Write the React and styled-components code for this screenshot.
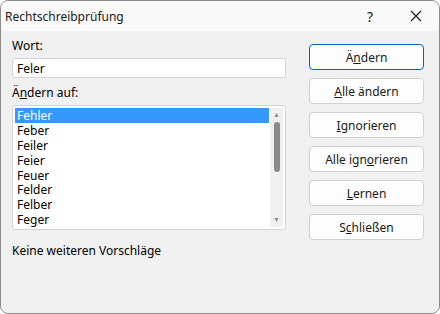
import React from 'react'
import styled, { createGlobalStyle } from 'styled-components'

const Global = createGlobalStyle`
  html, body {
    margin: 0;
    padding: 0;
    background: #ffffff;
  }
  * { box-sizing: border-box; }
`

const suggestions = ['Fehler', 'Feber', 'Feiler', 'Feier', 'Feuer', 'Felder', 'Felber', 'Feger']

const buttons = [
  { pre: 'Ä', key: 'n', post: 'dern', primary: true },
  { pre: '', key: 'A', post: 'lle ändern' },
  { pre: '', key: 'I', post: 'gnorieren' },
  { pre: 'Alle ign', key: 'o', post: 'rieren' },
  { pre: '', key: 'L', post: 'ernen' },
  { pre: 'S', key: 'c', post: 'hließen' }
]

export default function App() {
  return (
    <>
      <Global />
      <Window>
        <TitleBar>
          <Title>Rechtschreibprüfung</Title>
          <Caption>?</Caption>
          <Caption>
            <svg width="12" height="12" viewBox="0 0 12 12">
              <path d="M1 1 L11 11 M11 1 L1 11" stroke="#1a1a1a" strokeWidth="1.1" fill="none" />
            </svg>
          </Caption>
        </TitleBar>
        <Body>
          <LeftColumn>
            <Label>Wort:</Label>
            <Input defaultValue="Feler" />
            <Label $top={7}>
              Ä<u>n</u>dern auf:
            </Label>
            <ListBox>
              <Items>
                {suggestions.map((word, i) => (
                  <Item key={word} $selected={i === 0}>{word}</Item>
                ))}
              </Items>
              <ScrollBar>
                <Arrow>▲</Arrow>
                <Track>
                  <Thumb />
                </Track>
                <Arrow>▼</Arrow>
              </ScrollBar>
            </ListBox>
            <Status>Keine weiteren Vorschläge</Status>
          </LeftColumn>
          <ButtonColumn>
            {buttons.map(b => (
              <Button key={b.key + b.post} $primary={b.primary}>
                {b.pre}<u>{b.key}</u>{b.post}
              </Button>
            ))}
          </ButtonColumn>
        </Body>
      </Window>
    </>
  )
}

const Window = styled.div`
  width: 440px;
  height: 314px;
  border: 1px solid #8c8c8c;
  border-radius: 8px;
  overflow: hidden;
  background: #f0f0f0;
  display: flex;
  flex-direction: column;
  font-family: 'Noto Sans', 'Segoe UI', sans-serif;
  font-size: 12px;
  color: #000;
`

const TitleBar = styled.div`
  height: 30px;
  flex: none;
  display: flex;
  align-items: center;
  background: #f9f9f9;
`

const Title = styled.div`
  flex: 1;
  padding-left: 4px;
  font-size: 12px;
  color: #1a1a1a;
`

const Caption = styled.div`
  width: 46px;
  height: 30px;
  display: flex;
  align-items: center;
  justify-content: center;
  font-size: 14px;
  color: #1a1a1a;
`

const Body = styled.div`
  flex: 1;
  display: flex;
  padding: 7px 15px 0 11px;
  gap: 23px;
`

const LeftColumn = styled.div`
  width: 274px;
  display: flex;
  flex-direction: column;
`

const Label = styled.div`
  margin-top: ${p => p.$top || 0}px;
  height: 16px;
  line-height: 16px;
  margin-bottom: 4px;
`

const Input = styled.input`
  height: 20px;
  border: 1px solid #d4d4d4;
  border-radius: 3px;
  background: #fff;
  padding: 0 4px;
  font: inherit;
  color: #000;
  outline: none;
`

const ListBox = styled.div`
  height: 125px;
  border: 1px solid #d4d4d4;
  border-radius: 3px;
  background: #fff;
  display: flex;
  padding: 2px;
`

const Items = styled.div`
  flex: 1;
  display: flex;
  flex-direction: column;
  overflow: hidden;
`

const Item = styled.div`
  height: 15px;
  line-height: 15px;
  padding-left: 2px;
  overflow: hidden;
  background: ${p => (p.$selected ? '#3399ff' : 'transparent')};
  color: ${p => (p.$selected ? '#fff' : '#000')};
`

const ScrollBar = styled.div`
  width: 13px;
  margin-left: 1px;
  background: #f0f0f0;
  display: flex;
  flex-direction: column;
  align-items: center;
`

const Arrow = styled.div`
  height: 14px;
  line-height: 14px;
  font-size: 7px;
  color: #8a8a8a;
`

const Track = styled.div`
  flex: 1;
  width: 100%;
  display: flex;
  justify-content: center;
`

const Thumb = styled.div`
  width: 6px;
  height: 50px;
  border-radius: 3px;
  background: #8a8a8a;
`

const Status = styled.div`
  margin-top: 12px;
`

const ButtonColumn = styled.div`
  width: 115px;
  padding-top: 6px;
  display: flex;
  flex-direction: column;
  gap: 8px;
`

const Button = styled.div`
  height: 26px;
  display: flex;
  align-items: center;
  justify-content: center;
  background: #fdfdfd;
  border: 1px solid ${p => (p.$primary ? '#0067c0' : '#d0d0d0')};
  border-radius: 4px;
  color: #1a1a1a;
`
